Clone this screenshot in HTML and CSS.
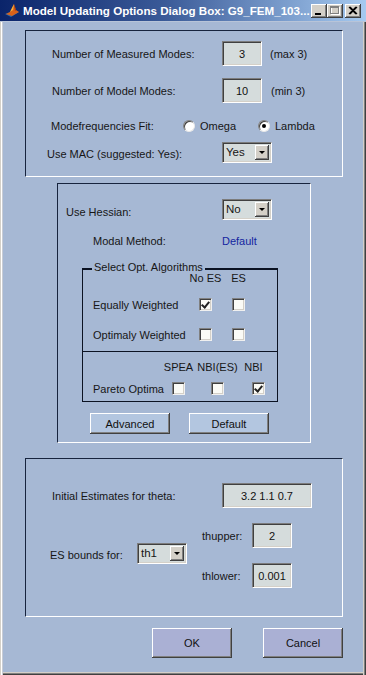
FILE: index.html
```html
<!DOCTYPE html>
<html>
<head>
<meta charset="utf-8">
<title>Model Updating Options Dialog Box</title>
<link rel="stylesheet" href="styles.css">
</head>
<body>
<div class="window">
  <div class="titlebar">
    <svg class="app-icon" width="16" height="16" viewBox="0 0 16 16">
      <polygon points="1,11 7,14 15,9 9,8" fill="#2f6aa8"/>
      <polygon points="2,11 6,9 10,1 12,7 15,9 8,13" fill="#d9621a"/>
      <polygon points="6,9 10,1 9,7" fill="#f6b23a"/>
      <polygon points="10,1 12,7 11,8" fill="#9c3412"/>
    </svg>
    <span class="title">Model Updating Options Dialog Box: G9_FEM_103...</span>
    <div class="caption-btns">
      <span class="cbtn"><svg width="16" height="14" viewBox="0 0 16 14"><rect x="4" y="9" width="6" height="2" fill="#000"/></svg></span>
      <span class="cbtn"><svg width="16" height="14" viewBox="0 0 16 14"><rect x="4.5" y="3.5" width="8" height="7" fill="none" stroke="#fff"/><rect x="3.5" y="2.5" width="8" height="7" fill="none" stroke="#808080"/><line x1="3" y1="3.5" x2="12" y2="3.5" stroke="#808080"/></svg></span>
      <span class="cbtn cbtn-close"><svg width="16" height="14" viewBox="0 0 16 14"><path d="M4 3 L11 10 M5 3 L12 10 M11 3 L4 10 M12 3 L5 10" stroke="#000" stroke-width="1.2"/></svg></span>
    </div>
  </div>

  <div class="client">
    <section class="panel panel-wide panel-modes">
      <div class="row row-edit row-first">
        <span class="lbl lbl-a">Number of Measured Modes:</span>
        <span class="edit edit-sm">3</span>
        <span class="note">(max 3)</span>
      </div>
      <div class="row row-edit row-second">
        <span class="lbl lbl-a">Number of Model Modes:</span>
        <span class="edit edit-sm">10</span>
        <span class="note note-b">(min 3)</span>
      </div>
      <div class="row row-radio">
        <span class="lbl lbl-radio">Modefrequencies Fit:</span>
        <span class="opt opt-omega"><span class="radio"></span>Omega</span>
        <span class="opt"><span class="radio radio-on"></span>Lambda</span>
      </div>
      <div class="row row-popup">
        <span class="lbl lbl-mac">Use MAC (suggested: Yes):</span>
        <span class="popup"><span class="popup-text">Yes</span><span class="popup-btn"></span></span>
      </div>
    </section>

    <section class="panel panel-narrow">
      <div class="row row-hessian">
        <span class="lbl lbl-hessian">Use Hessian:</span>
        <span class="popup"><span class="popup-text">No</span><span class="popup-btn"></span></span>
      </div>
      <div class="row row-modal">
        <span class="lbl lbl-modal">Modal Method:</span>
        <span class="link-text">Default</span>
      </div>

      <div class="group">
        <div class="group-title">Select Opt. Algorithms</div>
        <div class="group-sec group-sec-top">
          <div class="g-head g-head-1">
            <span class="g-lbl g-lbl-1"></span>
            <span class="hcell">No ES</span>
            <span class="hcell hcell-es">ES</span>
          </div>
          <div class="g-row g-row-ew">
            <span class="g-lbl g-lbl-1">Equally Weighted</span>
            <span class="check check-on"></span>
            <span class="check check-es"></span>
          </div>
          <div class="g-row g-row-ow">
            <span class="g-lbl g-lbl-1">Optimaly Weighted</span>
            <span class="check"></span>
            <span class="check check-es"></span>
          </div>
        </div>
        <div class="group-sec group-sec-bottom">
          <div class="g-head g-head-2">
            <span class="g-lbl g-lbl-2"></span>
            <span class="hcell">SPEA</span>
            <span class="hcell hcell-nbies">NBI(ES)</span>
            <span class="hcell hcell-nbi">NBI</span>
          </div>
          <div class="g-row g-row-pareto">
            <span class="g-lbl g-lbl-2">Pareto Optima</span>
            <span class="check"></span>
            <span class="check check-nbies"></span>
            <span class="check check-on check-nbi"></span>
          </div>
        </div>
      </div>

      <div class="btn-row">
        <button class="btn btn-light">Advanced</button>
        <button class="btn btn-light">Default</button>
      </div>
    </section>

    <section class="panel panel-wide panel-theta">
      <div class="row row-edit row-init">
        <span class="lbl lbl-a">Initial Estimates for theta:</span>
        <span class="edit edit-lg">3.2 1.1 0.7</span>
      </div>
      <div class="bounds">
        <div class="bounds-left">
          <span class="lbl lbl-bounds">ES bounds for:</span>
          <span class="popup"><span class="popup-text">th1</span><span class="popup-btn"></span></span>
        </div>
        <div class="bounds-right">
          <div class="th-row">
            <span class="lbl lbl-th">thupper:</span>
            <span class="edit edit-sm">2</span>
          </div>
          <div class="th-row">
            <span class="lbl lbl-th">thlower:</span>
            <span class="edit edit-sm">0.001</span>
          </div>
        </div>
      </div>
    </section>

    <div class="actions">
      <button class="btn btn-main">OK</button>
      <button class="btn btn-main">Cancel</button>
    </div>
  </div>
</div>
</body>
</html>
```

FILE: styles.css
```css
* { box-sizing: border-box; }
html, body { margin: 0; padding: 0; }
body {
  width: 366px;
  height: 675px;
  overflow: hidden;
  font-family: "Liberation Sans", Arial, sans-serif;
  font-size: 11px;
  color: #161616;
  background: #a6b8d4;
}
.window { width: 366px; height: 675px; display: flex; flex-direction: column; }

/* title bar */
.titlebar {
  height: 22px;
  flex: none;
  display: flex;
  align-items: center;
  padding: 0 5px 0 4px;
  background: linear-gradient(to right, #0a246a 0%, #3a5a98 45%, #a6caf0 100%);
  border-bottom: 1px solid #b8c4d8;
}
.app-icon { flex: none; margin-right: 3px; }
.title {
  flex: 1;
  color: #fff;
  font-weight: bold;
  font-size: 11.6px;
  white-space: nowrap;
  overflow: hidden;
}
.caption-btns { display: flex; flex: none; }
.cbtn {
  display: block;
  width: 16px;
  height: 14px;
  background: #d4d0c8;
  box-shadow: inset -1px -1px #404040, inset 1px 1px #fff, inset -2px -2px #808080;
}
.cbtn svg { display: block; }
.cbtn-close { margin-left: 2px; }

/* client area */
.client {
  flex: 1;
  padding: 8px 3px 3px 3px;
  box-shadow: inset 1px 0 #d4d0c8, inset 2px 0 #fff, inset 3px 0 #c8ccd4,
              inset -1px 0 #404040, inset -2px 0 #808080, inset -3px 0 #d4d0c8,
              inset 0 -1px #404040, inset 0 -2px #808080, inset 0 -3px #d4d0c8;
}

.panel {
  border-top: 1px solid #17243e;
  border-left: 1px solid #17243e;
  border-right: 1px solid #fff;
  border-bottom: 1px solid #fff;
}
.panel-wide { width: 318px; margin-left: 22px; }
.panel-modes { height: 147px; padding-top: 10px; }
.panel-narrow { width: 254px; height: 260px; margin-left: 54px; margin-top: 6px; padding-top: 14px; }
.panel-theta { height: 159px; margin-top: 15px; padding-top: 24px; }

.row { display: flex; align-items: center; white-space: nowrap; }
.lbl { flex: none; }

.row-edit { height: 25px; }
.row-second { margin-top: 12px; }
.lbl-a { width: 196px; padding-left: 26px; }
.note { margin-left: 8px; }
.note-b { margin-left: 9px; }

.row-radio { height: 14px; margin-top: 16px; }
.lbl-radio { width: 157px; padding-left: 25px; }
.opt { display: flex; align-items: center; }
.opt-omega { width: 75px; }
.radio {
  width: 12px;
  height: 12px;
  border-radius: 50%;
  background: #fff;
  margin-right: 5px;
  border: 1px solid;
  border-color: #808080 #e8e8e8 #e8e8e8 #808080;
  box-shadow: inset 1px 1px #404040;
  display: flex;
  align-items: center;
  justify-content: center;
}
.radio-on::after {
  content: "";
  width: 4px;
  height: 4px;
  border-radius: 50%;
  background: #000;
}

.row-popup { height: 21px; margin-top: 9px; }
.lbl-mac { width: 196px; padding-left: 21px; padding-top: 3px; }

.edit {
  flex: none;
  height: 25px;
  background: #d5dcdc;
  border: 1px solid;
  border-color: #7c7c7c #fff #fff #7c7c7c;
  box-shadow: inset 1px 1px #404040, inset -1px -1px #d4d0c8;
  display: flex;
  align-items: center;
  justify-content: center;
  color: #111;
}
.edit-sm { width: 40px; }
.edit-lg { width: 90px; }

.popup {
  flex: none;
  width: 50px;
  height: 21px;
  background: #d5dcdc;
  border: 1px solid;
  border-color: #7c7c7c #fff #fff #7c7c7c;
  box-shadow: inset 1px 1px #404040, inset -1px -1px #d4d0c8;
  display: flex;
  justify-content: space-between;
  padding: 2px 2px 2px 3px;
}
.popup-text { font-size: 11.5px; line-height: 12px; padding-top: 1px; }
.popup-btn {
  width: 14px;
  height: 15px;
  background: #d4d0c8;
  box-shadow: inset -1px -1px #404040, inset 1px 1px #fff, inset -2px -2px #808080;
  position: relative;
}
.popup-btn::after {
  content: "";
  position: absolute;
  left: 4px;
  top: 6px;
  border-left: 3px solid transparent;
  border-right: 3px solid transparent;
  border-top: 3px solid #000;
}

/* panel 2 */
.row-hessian { height: 22px; }
.lbl-hessian { width: 164px; padding-left: 8px; padding-top: 5px; }
.row-modal { height: 14px; margin-top: 14px; }
.lbl-modal { width: 164px; padding-left: 35px; }
.link-text { color: #1425a0; }

.group {
  width: 196px;
  height: 134px;
  margin: 20px 0 0 24px;
  border: 1px solid #0b1222;
  border-top-width: 2px;
}
.group-title {
  width: fit-content;
  margin: -9px 0 0 9px;
  padding: 0 2px;
  height: 12px;
  line-height: 12px;
  background: #a6b8d4;
  white-space: nowrap;
}
.group-sec-top { height: 80px; border-bottom: 1px solid #0b1222; }
.g-head, .g-row { display: flex; align-items: center; height: 13px; white-space: nowrap; }
.g-head-1 { margin-top: -1px; }
.g-row-ew { margin-top: 13px; }
.g-row-ow { margin-top: 17px; }
.g-head-2 { margin-top: 9px; }
.g-row-pareto { margin-top: 8px; }
.g-lbl { flex: none; padding-left: 10px; }
.g-lbl-1 { width: 116px; }
.g-lbl-2 { width: 89px; }
.hcell { width: 13px; flex: none; display: flex; justify-content: center; line-height: 13px; }
.hcell-es { margin-left: 20px; }
.hcell-nbies { margin-left: 26px; }
.hcell-nbi { margin-left: 23px; }
.check {
  flex: none;
  width: 13px;
  height: 13px;
  background: #fbfbf6;
  border: 1px solid;
  border-color: #808080 #f0f0f0 #f0f0f0 #808080;
  box-shadow: inset 1px 1px #404040, inset -1px -1px #d4d0c8;
  position: relative;
}
.check-es { margin-left: 20px; }
.check-nbies { margin-left: 26px; }
.check-nbi { margin-left: 28px; }
.check-on::after {
  content: "";
  position: absolute;
  left: 3px;
  top: 1px;
  width: 3px;
  height: 6px;
  border-right: 2px solid #222;
  border-bottom: 2px solid #222;
  transform: rotate(40deg);
}

.btn-row { display: flex; gap: 19px; margin: 11px 0 0 32px; }
.btn {
  font-family: "Liberation Sans", Arial, sans-serif;
  font-size: 11px;
  color: #111;
  border: none;
  padding: 0;
  width: 80px;
  box-shadow: inset -1px -1px #404040, inset 1px 1px #fff, inset -2px -2px #808080;
}
.btn-light { height: 21px; background: #b3c6e0; }
.btn-main { height: 30px; background: #aab0d4; }

/* panel 3 */
.bounds { display: flex; margin-top: 15px; }
.bounds-left { display: flex; align-items: center; margin-bottom: 4px; }
.lbl-bounds { width: 111px; padding-left: 24px; padding-top: 3px; }
.bounds-right { margin-left: 15px; display: flex; flex-direction: column; gap: 15px; }
.th-row { display: flex; align-items: center; height: 25px; }
.lbl-th { width: 50px; }

.actions { width: 318px; margin: 11px 0 0 22px; display: flex; justify-content: flex-end; gap: 31px; }
```
